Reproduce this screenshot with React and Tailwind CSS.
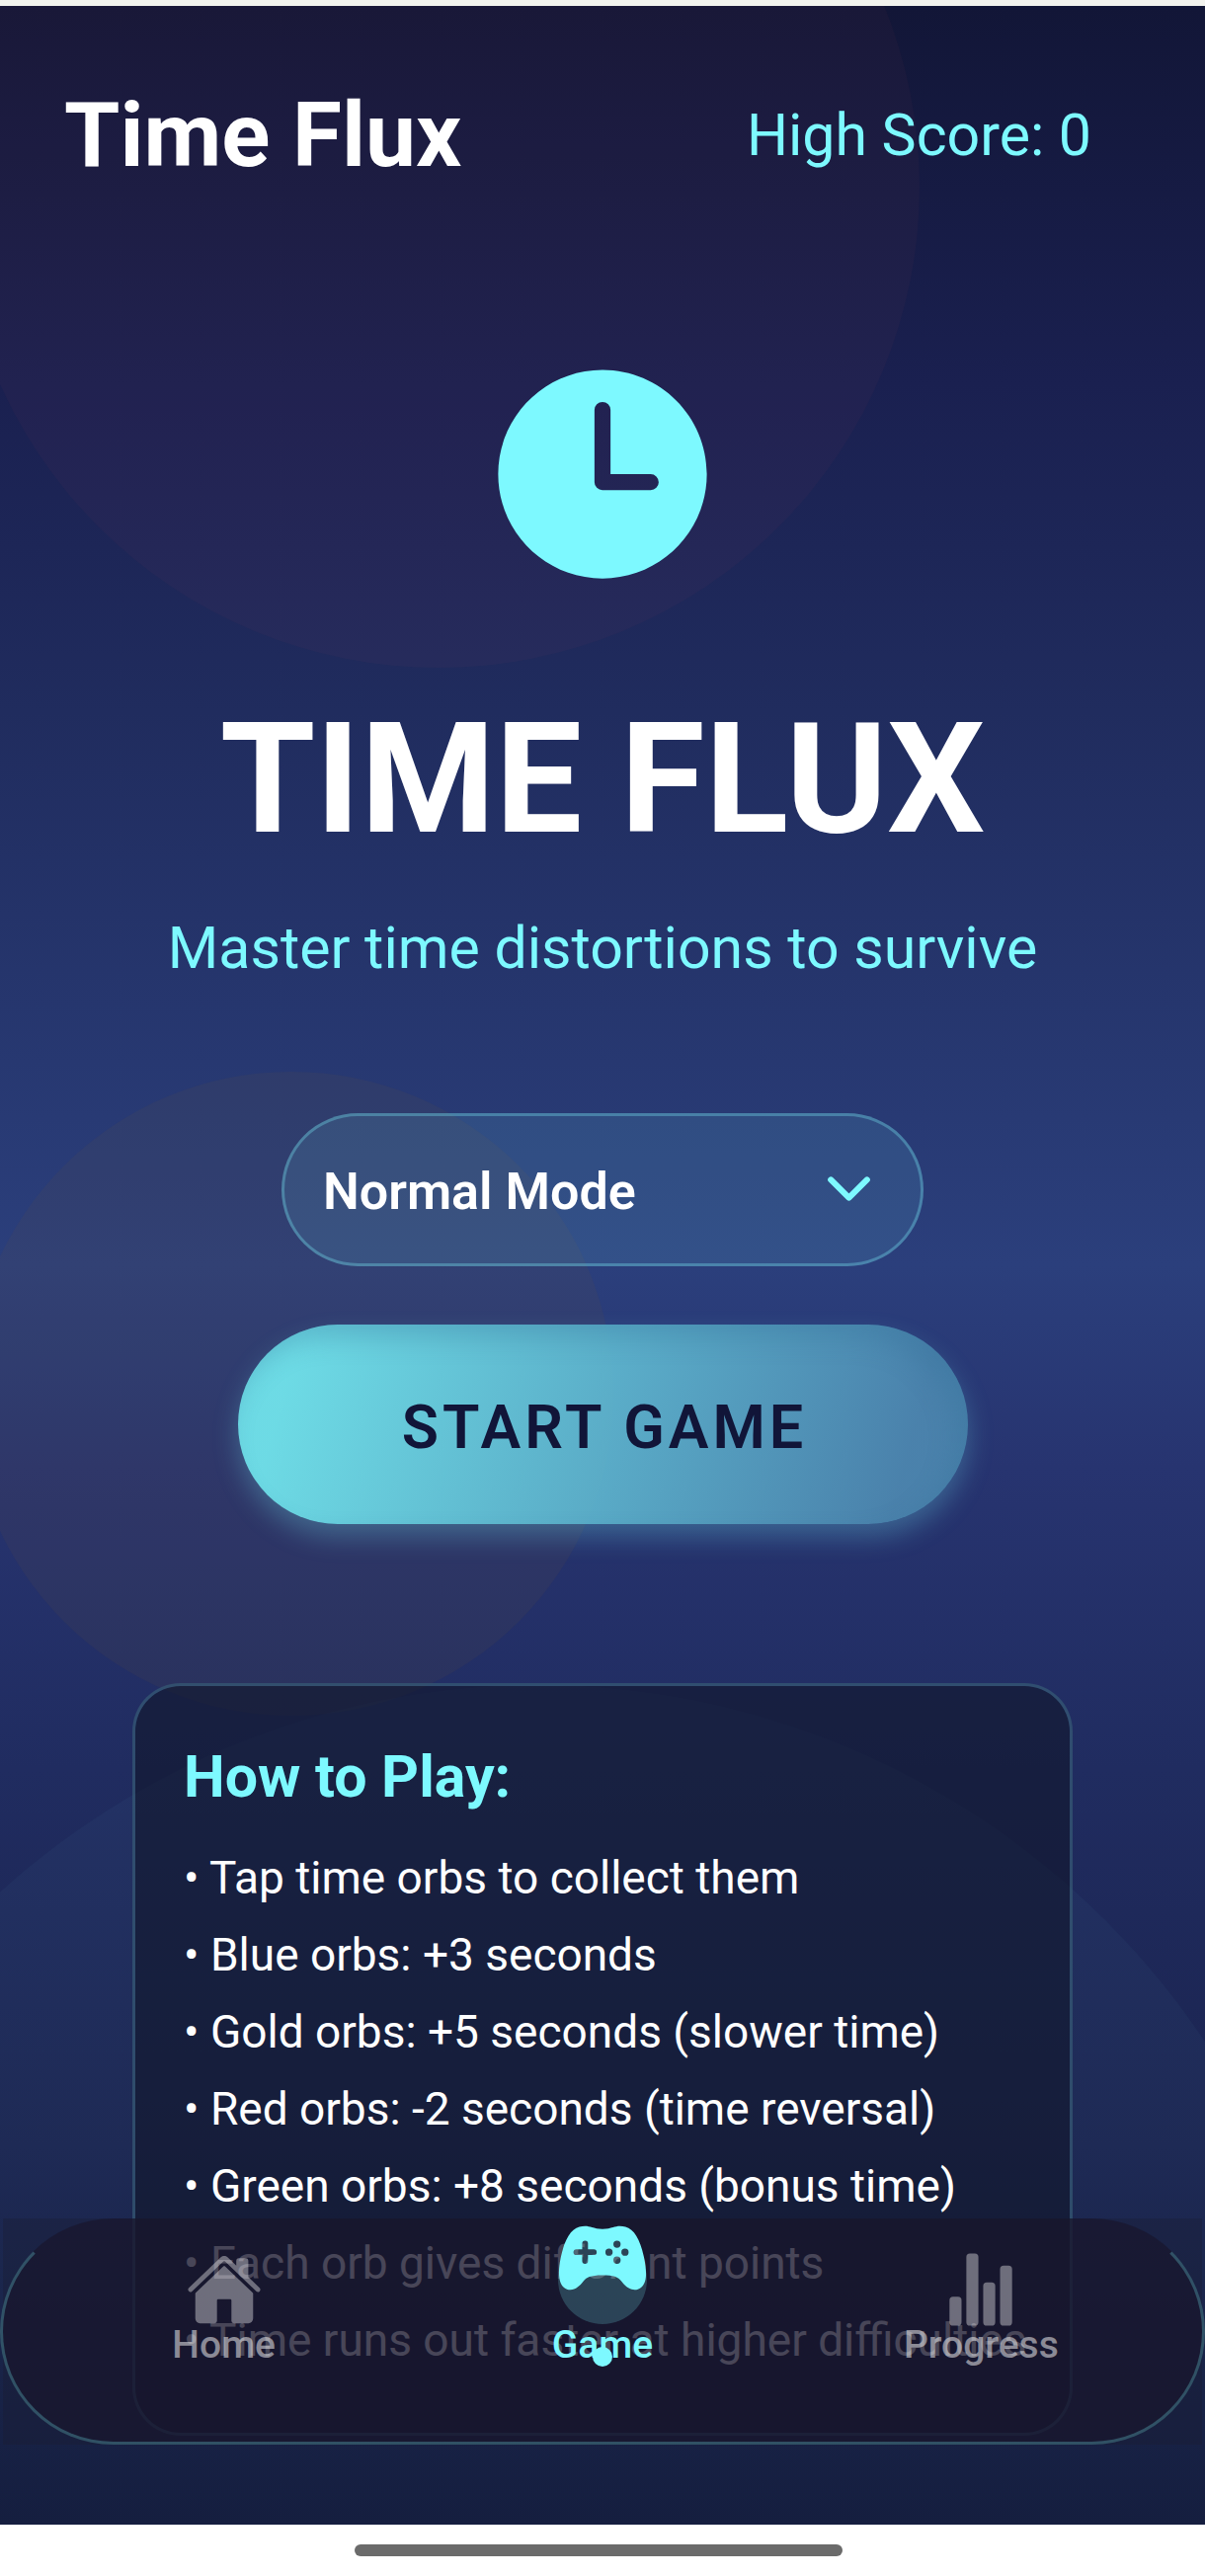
import { useState } from "react";
import {
  IoTime,
  IoChevronDown,
  IoHome,
  IoGameController,
  IoStatsChart,
} from "react-icons/io5";

const TIPS = [
  "Tap time orbs to collect them",
  "Blue orbs: +3 seconds",
  "Gold orbs: +5 seconds (slower time)",
  "Red orbs: -2 seconds (time reversal)",
  "Green orbs: +8 seconds (bonus time)",
  "Each orb gives different points",
  "Time runs out faster at higher difficulties",
];

function Orbs() {
  return (
    <div aria-hidden="true" className="pointer-events-none absolute inset-0 overflow-hidden">
      <div className="absolute -top-[304px] -left-[43px] size-[974px] rounded-full bg-[rgba(255,100,80,0.03)]" />
      <div className="absolute top-[1079px] -left-[31px] size-[652px] rounded-full bg-[rgba(120,90,50,0.1)]" />
      <div className="absolute top-[1700px] -left-[268px] size-[1625px] rounded-full bg-[rgba(125,249,255,0.03)]" />
    </div>
  );
}

function Header() {
  return (
    <header className="flex items-center justify-between pt-[78px] pr-[115px] pl-[65px]">
      <h1 className="text-[91px] leading-[106px] font-bold">Time Flux</h1>
      <p className="text-[59px] leading-[68px] text-[#7df9ff]">High Score: 0</p>
    </header>
  );
}

function ModeSelect() {
  const [mode, setMode] = useState("Normal Mode");
  return (
    <div className="relative mt-[133px] w-[650px]">
      <select
        aria-label="Game mode"
        value={mode}
        onChange={(e) => setMode(e.target.value)}
        className="h-[155px] w-full appearance-none rounded-full border-[3px] border-[rgba(125,249,255,0.3)] bg-[rgba(125,249,255,0.1)] px-[39px] pt-1 text-[52px] font-semibold text-white outline-none"
      >
        <option>Normal Mode</option>
        <option>Hard Mode</option>
      </select>
      <IoChevronDown className="pointer-events-none absolute top-11 right-[43px] size-[65px] text-[#7df9ff]" />
    </div>
  );
}

function HowToPlay() {
  return (
    <section className="mt-[161px] w-[952px] rounded-[49px] border-[3px] border-[rgba(125,220,255,0.25)] bg-[rgba(16,22,42,0.6)] px-[49px] pt-14 pb-[55px]">
      <h3 className="text-[59px] leading-[72px] font-bold text-[#7df9ff]">How to Play:</h3>
      <ul className="mt-[27px] text-[46px] leading-[78px] whitespace-nowrap">
        {TIPS.map((tip) => (
          <li key={tip}>• {tip}</li>
        ))}
      </ul>
    </section>
  );
}

function TabBar() {
  return (
    <nav className="absolute inset-x-0 bottom-[81px]">
      <div className="mx-[3px] bg-[rgba(26,26,46,0.3)]">
        <div className="-mx-[3px] flex h-[229px] rounded-full border-[3px] border-t-transparent border-r-[rgba(125,249,255,0.25)] border-b-[rgba(125,249,255,0.25)] border-l-[rgba(125,249,255,0.25)] bg-[rgba(24,22,44,0.7)] px-8">
          <a href="#home" className="flex flex-1 flex-col items-center pt-[30px] text-[rgba(255,255,255,0.5)]">
            <IoHome className="size-[78px] opacity-75" />
            <span className="text-[39px] leading-[34px] font-medium">Home</span>
          </a>
          <a href="#game" aria-current="page" className="relative flex flex-1 flex-col items-center pt-[14px] text-[#7df9ff]">
            <span className="flex size-[90px] items-center justify-center rounded-full bg-[rgba(125,249,255,0.2)]">
              <IoGameController className="mb-[44px] size-[94px] shrink-0" />
            </span>
            <span className="mt-1 text-[39px] leading-[34px] font-medium">Game</span>
            <span className="absolute top-[127px] size-5 rounded-full bg-[#7df9ff]" />
          </a>
          <a href="#progress" className="flex flex-1 flex-col items-center pt-[30px] text-[rgba(255,255,255,0.5)]">
            <IoStatsChart className="size-[78px] opacity-75" />
            <span className="text-[39px] leading-[34px] font-medium">Progress</span>
          </a>
        </div>
      </div>
    </nav>
  );
}

export default function App() {
  return (
    <div className="flex min-h-screen flex-col bg-white font-[Roboto,sans-serif] text-white">
      <div className="h-[6px] bg-[#f2f3ee]" />
      <div className="relative flex flex-1 flex-col bg-[linear-gradient(180deg,#121637_0%,#1a2050_15%,#202c5e_28%,#2b3f7c_50%,#273470_58%,#202c60_70%,#1b2450_85%,#121739_100%)]">
        <Orbs />
        <div className="relative flex flex-1 flex-col">
          <Header />
          <main className="flex flex-col items-center pt-[160px] pb-[90px]">
            <IoTime className="size-[260px] text-[#7df9ff]" />
            <h2 className="mt-[88px] text-[156px] leading-[182px] font-bold">TIME FLUX</h2>
            <p className="mt-[46px] text-[59px] leading-[68px] text-[#7df9ff]">
              Master time distortions to survive
            </p>
            <ModeSelect />
            <button
              type="button"
              className="mt-[59px] h-[202px] w-[739px] rounded-full bg-[linear-gradient(105deg,rgba(116,236,242,0.9)_8%,rgba(98,192,214,0.9)_45%,rgba(78,138,178,0.9)_90%)] pt-2 pl-1 text-[61px] font-semibold tracking-[4px] text-[#111538] shadow-[0_13px_26px_rgba(125,249,255,0.25),inset_-12px_14px_26px_rgba(50,110,150,0.3)]"
            >
              START GAME
            </button>
            <HowToPlay />
          </main>
        </div>
        <TabBar />
      </div>
      <div className="flex h-[52px] items-center justify-center bg-white pr-2">
        <div className="h-3 w-[494px] rounded-full bg-[#6b6b6b]" />
      </div>
    </div>
  );
}
